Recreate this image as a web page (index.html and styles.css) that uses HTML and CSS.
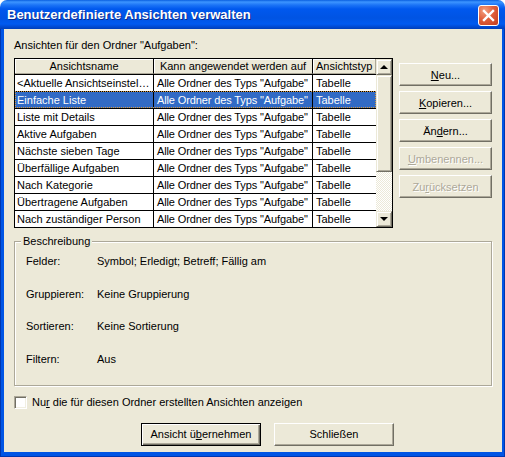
FILE: index.html
```html
<!DOCTYPE html>
<html lang="de">
<head>
    <meta charset="UTF-8">
    <title>Benutzerdefinierte Ansichten verwalten</title>
    <link rel="stylesheet" href="styles.css">
</head>
<body>
    <div class="window">
        <div class="titlebar">
            <span class="title">Benutzerdefinierte Ansichten verwalten</span>
            <span class="close">
                <svg width="19" height="19" viewBox="0 0 19 19">
                    <path d="M5 5 L14 14 M14 5 L5 14" stroke="#fff" stroke-width="2.4" stroke-linecap="square"/>
                </svg>
            </span>
        </div>

        <div class="frame">
            <div class="client">
                <div class="caption">Ansichten für den Ordner "Aufgaben":</div>

                <div class="main">
                    <div class="listview">
                        <div class="grid">
                            <div class="row head">
                                <div class="cell">Ansichtsname</div>
                                <div class="cell">Kann angewendet werden auf</div>
                                <div class="cell">Ansichtstyp</div>
                            </div>
                            <div class="row">
                                <div class="cell">&lt;Aktuelle Ansichtseinstellungen&gt;</div>
                                <div class="cell">Alle Ordner des Typs "Aufgabe"</div>
                                <div class="cell">Tabelle</div>
                            </div>
                            <div class="row selected">
                                <div class="cell">Einfache Liste</div>
                                <div class="cell">Alle Ordner des Typs "Aufgabe"</div>
                                <div class="cell">Tabelle</div>
                            </div>
                            <div class="row">
                                <div class="cell">Liste mit Details</div>
                                <div class="cell">Alle Ordner des Typs "Aufgabe"</div>
                                <div class="cell">Tabelle</div>
                            </div>
                            <div class="row">
                                <div class="cell">Aktive Aufgaben</div>
                                <div class="cell">Alle Ordner des Typs "Aufgabe"</div>
                                <div class="cell">Tabelle</div>
                            </div>
                            <div class="row">
                                <div class="cell">Nächste sieben Tage</div>
                                <div class="cell">Alle Ordner des Typs "Aufgabe"</div>
                                <div class="cell">Tabelle</div>
                            </div>
                            <div class="row">
                                <div class="cell">Überfällige Aufgaben</div>
                                <div class="cell">Alle Ordner des Typs "Aufgabe"</div>
                                <div class="cell">Tabelle</div>
                            </div>
                            <div class="row">
                                <div class="cell">Nach Kategorie</div>
                                <div class="cell">Alle Ordner des Typs "Aufgabe"</div>
                                <div class="cell">Tabelle</div>
                            </div>
                            <div class="row">
                                <div class="cell">Übertragene Aufgaben</div>
                                <div class="cell">Alle Ordner des Typs "Aufgabe"</div>
                                <div class="cell">Tabelle</div>
                            </div>
                            <div class="row">
                                <div class="cell">Nach zuständiger Person</div>
                                <div class="cell">Alle Ordner des Typs "Aufgabe"</div>
                                <div class="cell">Tabelle</div>
                            </div>
                        </div>

                        <div class="scrollbar">
                            <div class="sb-btn"><span class="arrow-up"></span></div>
                            <div class="sb-thumb"></div>
                            <div class="sb-track"></div>
                            <div class="sb-btn"><span class="arrow-down"></span></div>
                        </div>
                    </div>

                    <div class="side-buttons">
                        <button class="btn"><u>N</u>eu...</button>
                        <button class="btn"><u>K</u>opieren...</button>
                        <button class="btn">Än<u>d</u>ern...</button>
                        <button class="btn disabled"><u>U</u>mbenennen...</button>
                        <button class="btn disabled">Zu<u>r</u>ücksetzen</button>
                    </div>
                </div>

                <fieldset class="desc">
                    <legend>Beschreibung</legend>
                    <div class="desc-grid">
                        <span>Felder:</span><span>Symbol; Erledigt; Betreff; Fällig am</span>
                        <span>Gruppieren:</span><span>Keine Gruppierung</span>
                        <span>Sortieren:</span><span>Keine Sortierung</span>
                        <span>Filtern:</span><span>Aus</span>
                    </div>
                </fieldset>

                <div class="check-row">
                    <span class="checkbox"></span>
                    <span>Nu<u>r</u> die für diesen Ordner erstellten Ansichten anzeigen</span>
                </div>

                <div class="bottom-buttons">
                    <button class="btn wide default">Ansicht ü<u>b</u>ernehmen</button>
                    <button class="btn wide">Schließen</button>
                </div>
            </div>
        </div>
    </div>
</body>
</html>
```

FILE: styles.css
```css
* {
    margin: 0;
    padding: 0;
    box-sizing: border-box;
}

body {
    font-family: 'Liberation Sans', Arial, sans-serif;
    font-size: 11px;
    color: #000;
    background-color: #fff;
}

.window {
    width: 505px;
    height: 457px;
    display: flex;
    flex-direction: column;
    border-radius: 7px 7px 0 0;
    overflow: hidden;
}

/* Titelleiste */
.titlebar {
    height: 29px;
    flex: none;
    display: flex;
    align-items: center;
    padding: 0 6px 0 7px;
    background: linear-gradient(to bottom,
        #0a5fe0 0, #3d95ff 2px, #1c74f6 5px, #0058ee 9px,
        #0054e3 18px, #005af0 24px, #0049d0 27px, #003fb8 29px);
}

.title {
    flex: 1;
    color: #fff;
    font-weight: bold;
    font-size: 13px;
    text-shadow: 1px 1px #0c2a8a;
}

.close {
    width: 21px;
    height: 21px;
    margin-top: 2px;
    display: flex;
    align-items: center;
    justify-content: center;
    border: 1px solid #fff;
    border-radius: 3px;
    background: radial-gradient(circle at 30% 25%, #f4a080 0, #e0603c 45%, #c43c1c 100%);
}

/* Fensterrahmen */
.frame {
    flex: 1;
    display: flex;
    padding: 0 4px 5px 4px;
    background-color: #0055e5;
    box-shadow: inset 1px 0 #0036b0, inset -1px 0 #0036b0, inset 0 -1px #0036b0;
}

.client {
    flex: 1;
    background-color: #ece9d8;
    padding: 10px 10px 0 10px;
}

.caption {
    line-height: 13px;
    margin-bottom: 6px;
}

.main {
    display: flex;
    align-items: flex-start;
}

/* Listenansicht */
.listview {
    width: 379px;
    height: 170px;
    border: 1px solid #000;
    background-color: #fff;
    display: flex;
}

.grid {
    flex: 1;
}

.row {
    display: grid;
    grid-template-columns: 139px 159px 63px;
    height: 17px;
    border-top: 1px solid #000;
}

.cell {
    line-height: 16px;
    padding: 0 2px 0 3px;
    white-space: nowrap;
    overflow: hidden;
    text-overflow: ellipsis;
    border-right: 1px solid #000;
}

.cell:first-child {
    padding-left: 2px;
}

.cell:nth-child(2) {
    letter-spacing: -0.12px;
    padding-right: 0;
    text-overflow: clip;
}

.cell:last-child {
    border-right: none;
}

.row.head {
    height: 15px;
    border-top: none;
    background-color: #ece9d8;
}

.row.head .cell {
    line-height: 14px;
    text-align: center;
    padding: 0;
    letter-spacing: 0;
    border-bottom: 1px solid #aca899;
    box-shadow: inset 1px 1px #fff;
}

.row.head .cell:last-child {
    text-align: left;
    padding-left: 3px;
    border-right: 1px solid #aca899;
}

.row.selected {
    background-color: #316ac5;
    color: #fff;
    outline: 1px dotted #d89a40;
    outline-offset: -1px;
}

/* Bildlaufleiste */
.scrollbar {
    width: 16px;
    display: flex;
    flex-direction: column;
}

.sb-btn,
.sb-thumb {
    background-color: #ece9d8;
    border: 1px solid;
    border-color: #ece9d8 #716f64 #716f64 #ece9d8;
    box-shadow: inset 1px 1px #fff, inset -1px -1px #aca899;
}

.sb-btn {
    height: 16px;
    display: flex;
    align-items: center;
    justify-content: center;
}

.sb-thumb {
    height: 97px;
}

.sb-track {
    flex: 1;
    background: repeating-conic-gradient(#fff 0 25%, #ece9d8 0 50%) 0 0 / 2px 2px;
}

.arrow-up {
    width: 0;
    height: 0;
    border-left: 4px solid transparent;
    border-right: 4px solid transparent;
    border-bottom: 4px solid #000;
}

.arrow-down {
    width: 0;
    height: 0;
    border-left: 4px solid transparent;
    border-right: 4px solid transparent;
    border-top: 4px solid #000;
}

/* Schaltflächen */
.side-buttons {
    display: flex;
    flex-direction: column;
    gap: 5px;
    margin: 5px 0 0 6px;
}

.btn {
    width: 93px;
    height: 23px;
    font-family: inherit;
    font-size: 11px;
    color: #000;
    background-color: #ece9d8;
    border: 1px solid;
    border-color: #fff #716f64 #716f64 #fff;
    box-shadow: inset -1px -1px #aca899;
}

.btn.disabled {
    color: #aca899;
    text-shadow: 1px 1px #fff;
}

.btn.wide {
    width: 120px;
}

.btn.default {
    border: 1px solid #000;
    box-shadow: inset 1px 1px #fff, inset -1px -1px #716f64, inset -2px -2px #aca899;
}

/* Beschreibung */
.desc {
    margin-top: 7px;
    border: 1px solid #aca899;
    box-shadow: inset 1px 1px #fff, 1px 1px #fff;
    padding: 7px 0 19px 11px;
}

.desc legend {
    line-height: 13px;
    padding: 0 2px;
    margin-left: -5px;
    background-color: #ece9d8;
}

.desc-grid {
    display: grid;
    grid-template-columns: 71px 1fr;
    row-gap: 19.5px;
    line-height: 13px;
}

.check-row {
    display: flex;
    align-items: center;
    gap: 5px;
    margin-top: 10px;
    line-height: 13px;
}

.checkbox {
    width: 13px;
    height: 13px;
    background-color: #fff;
    border: 1px solid;
    border-color: #aca899 #fff #fff #aca899;
    box-shadow: inset 1px 1px #716f64, inset -1px -1px #f1efe2;
}

.bottom-buttons {
    display: flex;
    gap: 13px;
    margin: 14px 0 0 127px;
}
```
